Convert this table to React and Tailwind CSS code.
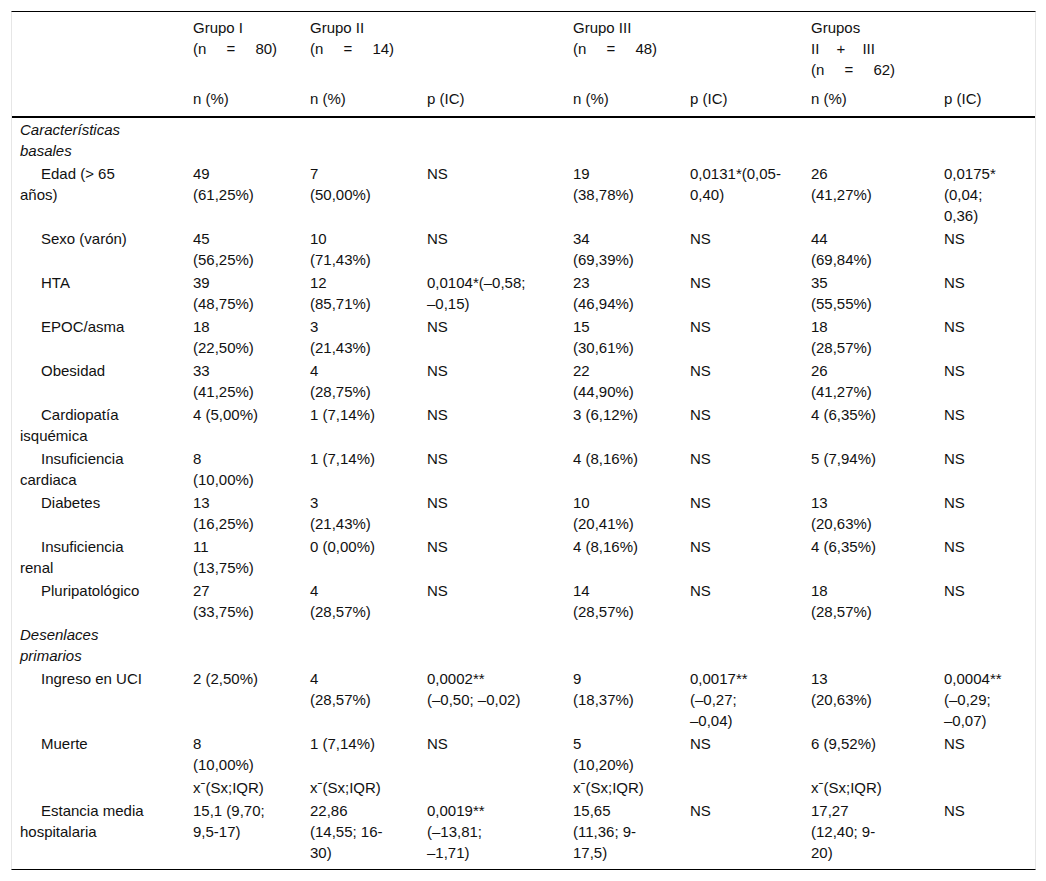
const header = [
  { lines: ['Grupo I', '(n = 80)'] },
  { lines: ['Grupo II', '(n = 14)'] },
  null,
  { lines: ['Grupo III', '(n = 48)'] },
  null,
  { lines: ['Grupos', 'II + III', '(n = 62)'] },
  null,
]

const subHeader = ['n (%)', 'n (%)', 'p (IC)', 'n (%)', 'p (IC)', 'n (%)', 'p (IC)']

// label, then the seven value columns; "\n" is where the original cell wraps
const rows = [
  { section: 'Características\nbasales' },
  ['Edad (> 65\naños)', '49\n(61,25%)', '7\n(50,00%)', 'NS', '19\n(38,78%)', '0,0131*(0,05-\n0,40)', '26\n(41,27%)', '0,0175*\n(0,04;\n0,36)'],
  ['Sexo (varón)', '45\n(56,25%)', '10\n(71,43%)', 'NS', '34\n(69,39%)', 'NS', '44\n(69,84%)', 'NS'],
  ['HTA', '39\n(48,75%)', '12\n(85,71%)', '0,0104*(–0,58;\n–0,15)', '23\n(46,94%)', 'NS', '35\n(55,55%)', 'NS'],
  ['EPOC/asma', '18\n(22,50%)', '3\n(21,43%)', 'NS', '15\n(30,61%)', 'NS', '18\n(28,57%)', 'NS'],
  ['Obesidad', '33\n(41,25%)', '4\n(28,75%)', 'NS', '22\n(44,90%)', 'NS', '26\n(41,27%)', 'NS'],
  ['Cardiopatía\nisquémica', '4 (5,00%)', '1 (7,14%)', 'NS', '3 (6,12%)', 'NS', '4 (6,35%)', 'NS'],
  ['Insuficiencia\ncardiaca', '8\n(10,00%)', '1 (7,14%)', 'NS', '4 (8,16%)', 'NS', '5 (7,94%)', 'NS'],
  ['Diabetes', '13\n(16,25%)', '3\n(21,43%)', 'NS', '10\n(20,41%)', 'NS', '13\n(20,63%)', 'NS'],
  ['Insuficiencia\nrenal', '11\n(13,75%)', '0 (0,00%)', 'NS', '4 (8,16%)', 'NS', '4 (6,35%)', 'NS'],
  ['Pluripatológico', '27\n(33,75%)', '4\n(28,57%)', 'NS', '14\n(28,57%)', 'NS', '18\n(28,57%)', 'NS'],
  { section: 'Desenlaces\nprimarios' },
  ['Ingreso en UCI', '2 (2,50%)', '4\n(28,57%)', '0,0002**\n(–0,50; –0,02)', '9\n(18,37%)', '0,0017**\n(–0,27;\n–0,04)', '13\n(20,63%)', '0,0004**\n(–0,29;\n–0,07)'],
  ['Muerte', '8\n(10,00%)', '1 (7,14%)', 'NS', '5\n(10,20%)', 'NS', '6 (9,52%)', 'NS'],
  { plain: true, cells: ['', 'xˉ(Sx;IQR)', 'xˉ(Sx;IQR)', '', 'xˉ(Sx;IQR)', '', 'xˉ(Sx;IQR)', ''] },
  ['Estancia media\nhospitalaria', '15,1 (9,70;\n9,5-17)', '22,86\n(14,55; 16-\n30)', '0,0019**\n(–13,81;\n–1,71)', '15,65\n(11,36; 9-\n17,5)', 'NS', '17,27\n(12,40; 9-\n20)', 'NS'],
]

function spacingFor(line) {
  if (line.startsWith('(n')) return '[word-spacing:16px]'
  if (line.includes('+')) return '[word-spacing:13px]'
  return ''
}

export default function App() {
  return (
    <div className="min-h-screen bg-white pt-[11px] pl-[11px] text-[15px] leading-[21px] text-[#111]" style={{ fontFamily: '"Liberation Sans", Arial, sans-serif' }}>
      <div className="w-[1025px] border-x border-y border-x-[#e6e6e6] border-y-black">
        <table className="w-full table-fixed border-collapse">
          <colgroup>
            <col className="w-[173px]" />
            <col className="w-[117px]" />
            <col className="w-[117px]" />
            <col className="w-[146px]" />
            <col className="w-[117px]" />
            <col className="w-[121px]" />
            <col className="w-[133px]" />
            <col className="w-[99px]" />
          </colgroup>
          <thead>
            <tr>
              <th className="pt-[5px] pb-[4px]" />
              {header.map((h, i) => (
                <th key={i} className="pl-2 pt-[5px] pb-[4px] text-left font-normal align-top whitespace-nowrap">
                  {h && h.lines.map((line, j) => (
                    <div key={j} className={spacingFor(line)}>
                      {line}
                    </div>
                  ))}
                </th>
              ))}
            </tr>
            <tr className="border-b-2 border-black">
              <th className="pt-[4px] pb-[7px]" />
              {subHeader.map((s, i) => (
                <th key={i} className="pl-2 pt-[4px] pb-[7px] text-left font-normal align-top whitespace-nowrap">{s}</th>
              ))}
            </tr>
          </thead>
          <tbody>
            {rows.map((row, i) => {
              const last = i === rows.length - 1
              if (row.section) {
                return (
                  <tr key={i}>
                    <td className="pl-2 py-px italic whitespace-pre-line align-top">{row.section}</td>
                    <td colSpan={7} />
                  </tr>
                )
              }
              const cells = row.plain ? row.cells : row
              return (
                <tr key={i}>
                  {cells.map((c, j) => (
                    <td
                      key={j}
                      className={`pl-2 pt-px align-top whitespace-pre-line ${last ? 'pb-[6px]' : 'pb-px'} ${j === 0 && !row.plain ? 'indent-[21px]' : ''}`}
                    >
                      {c}
                    </td>
                  ))}
                </tr>
              )
            })}
          </tbody>
        </table>
      </div>
    </div>
  )
}
